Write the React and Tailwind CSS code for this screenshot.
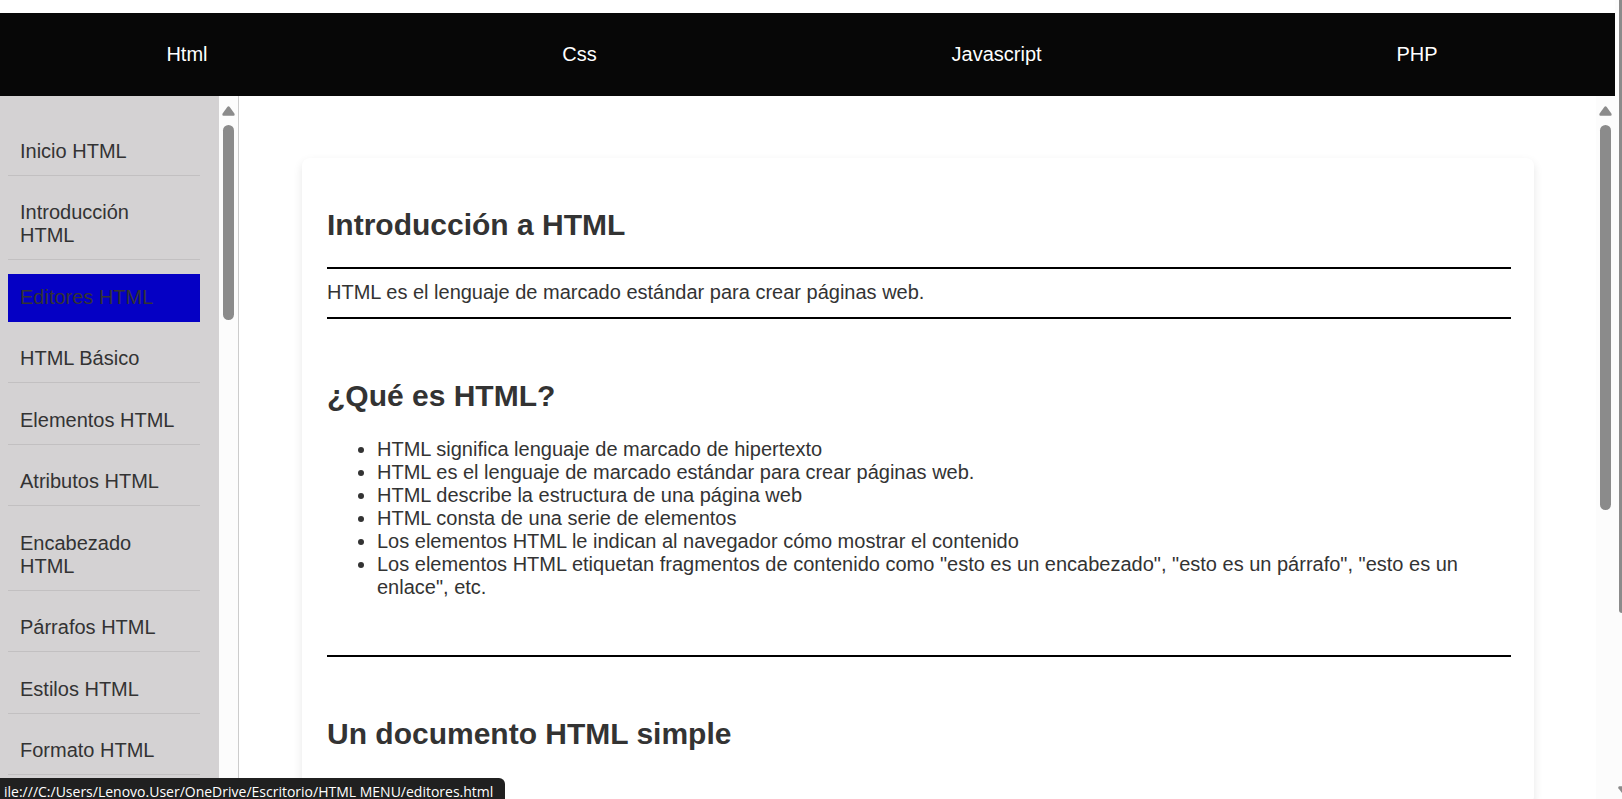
const sections = ["Html", "Css", "Javascript", "PHP"];

const topics = [
  "Inicio HTML",
  "Introducción HTML",
  "Editores HTML",
  "HTML Básico",
  "Elementos HTML",
  "Atributos HTML",
  "Encabezado HTML",
  "Párrafos HTML",
  "Estilos HTML",
  "Formato HTML",
];

const facts = [
  "HTML significa lenguaje de marcado de hipertexto",
  "HTML es el lenguaje de marcado estándar para crear páginas web.",
  "HTML describe la estructura de una página web",
  "HTML consta de una serie de elementos",
  "Los elementos HTML le indican al navegador cómo mostrar el contenido",
  'Los elementos HTML etiquetan fragmentos de contenido como "esto es un encabezado", "esto es un párrafo", "esto es un enlace", etc.',
];

function ScrollTrack({ thumb }) {
  return (
    <div aria-hidden="true" className="flex w-[19px] shrink-0 flex-col items-center bg-[#fcfcfc] pt-2.5">
      <svg viewBox="0 0 13 10" className="h-2.5 w-[13px] shrink-0">
        <path d="M5.3 .9Q6.5 -.5 7.7 .9L12.4 7.6Q13.2 9.7 11.5 9.8H1.5Q-.2 9.7 .6 7.6Z" fill="#8b8b8b" />
      </svg>
      <div className={`mt-[9px] w-[11px] rounded-full bg-[#8b8b8b] ${thumb}`} />
    </div>
  );
}

function Rule() {
  return <hr className="border-t-2 border-black" />;
}

function Heading({ children }) {
  return <h2 className="text-[30px] leading-[34px] font-bold">{children}</h2>;
}

export default function App() {
  return (
    <div className="relative flex h-screen overflow-hidden bg-white font-['Liberation_Sans',Arial,sans-serif] text-[20px] leading-[23px] text-[#333]">
      <div className="flex min-w-0 flex-1 flex-col pt-[13px]">
        <nav className="overflow-hidden bg-[#070707]">
          <ul className="-ml-[11px] flex justify-around py-[30px] text-white">
            {sections.map((name) => (
              <li key={name}>
                <a href={`#${name}`}>{name}</a>
              </li>
            ))}
          </ul>
        </nav>

        <div className="flex min-h-0 flex-1">
          <aside className="flex w-[239px] shrink-0 border-r border-[#ccc] bg-[#d4d2d3]">
            <ul className="flex min-w-0 flex-1 flex-col justify-between pt-8 pr-[19px] pb-6 pl-2">
              {topics.map((topic) => (
                <li key={topic}>
                  <a
                    href={`#${topic}`}
                    className={
                      topic === "Editores HTML"
                        ? "block border-b border-[#0500c4] bg-[#0500c4] px-3 py-3"
                        : "block border-b border-[#c2c0c1] px-3 py-3"
                    }
                  >
                    {topic}
                  </a>
                </li>
              ))}
            </ul>
            <ScrollTrack thumb="h-[195px]" />
          </aside>

          <main className="flex min-w-0 flex-1 overflow-hidden">
            <div className="min-w-0 flex-1 pt-[62px] pr-[62px] pl-[63px]">
              <article className="rounded-lg bg-white pt-[50px] pr-[23px] pb-[53px] pl-[25px] shadow-[0_4px_10px_rgba(0,0,0,0.1)]">
                <Heading>Introducción a HTML</Heading>
                <div className="mt-[25px]">
                  <Rule />
                  <p className="pt-3 pb-[13px]">HTML es el lenguaje de marcado estándar para crear páginas web.</p>
                  <Rule />
                </div>
                <section className="pt-[60px] pb-14">
                  <Heading>¿Qué es HTML?</Heading>
                  <ul className="mt-[25px] list-disc pl-[50px]">
                    {facts.map((fact) => (
                      <li key={fact}>{fact}</li>
                    ))}
                  </ul>
                </section>
                <Rule />
                <section className="pt-[60px]">
                  <Heading>Un documento HTML simple</Heading>
                </section>
              </article>
            </div>
            <ScrollTrack thumb="h-[385px]" />
          </main>
        </div>
      </div>

      <div aria-hidden="true" className="flex w-[7px] shrink-0 flex-col items-end justify-between overflow-hidden bg-[#fcfcfc] pb-[5px]">
        <div className="h-[613px] w-[3px] rounded-bl-full bg-[#8b8b8b]" />
        <svg viewBox="0 0 4 8" className="h-2 w-1">
          <path d="M1.3 .3H4V7L.4 2.2Q-.3 .8 1.3 .3Z" fill="#8b8b8b" />
        </svg>
      </div>

      <div className="absolute bottom-0 left-0 h-[21px] rounded-tr-md bg-[#202020] pt-1 pr-3 pl-1 font-['Open_Sans','Noto_Sans',sans-serif] text-[14px] leading-5 whitespace-nowrap text-white">
        ile:///C:/Users/Lenovo.User/OneDrive/Escritorio/HTML MENU/editores.html
      </div>
    </div>
  );
}
